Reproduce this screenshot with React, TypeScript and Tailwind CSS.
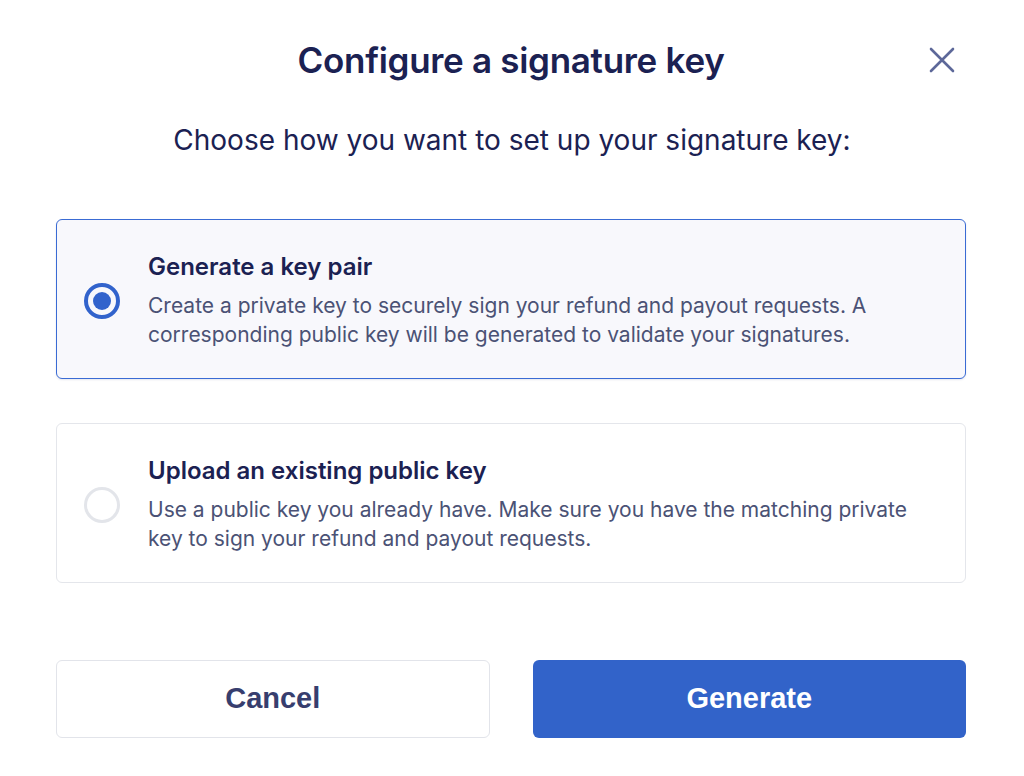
import React, { useState } from 'react';

type Choice = 'generate' | 'upload';

const options: { id: Choice; title: string; text: string }[] = [
  {
    id: 'generate',
    title: 'Generate a key pair',
    text: 'Create a private key to securely sign your refund and payout requests. A corresponding public key will be generated to validate your signatures.',
  },
  {
    id: 'upload',
    title: 'Upload an existing public key',
    text: 'Use a public key you already have. Make sure you have the matching private key to sign your refund and payout requests.',
  },
];

const App: React.FC = () => {
  const [choice, setChoice] = useState<Choice>('generate');

  return (
    <div className="min-h-screen w-full bg-white font-['Inter',sans-serif] text-[#1b2152]">
      {/* header */}
      <div className="grid grid-cols-[1fr_auto_1fr] items-center pl-[56px] pr-[58px] pt-[36px]">
        <div />
        <h1 className="text-[35px] leading-[48px] font-semibold tracking-[-0.3px] text-[#1b2152]">
          Configure a signature key
        </h1>
        <button className="justify-self-end mr-[10px] text-[#5d6899]" aria-label="Close">
          <svg width="28" height="28" viewBox="0 0 28 28" fill="none" stroke="currentColor" strokeWidth="2.6" strokeLinecap="round">
            <path d="M3 3L25 25M25 3L3 25" />
          </svg>
        </button>
      </div>

      <p className="mt-[38px] text-center text-[28px] leading-[36px] text-[#1b2152]">
        Choose how you want to set up your signature key:
      </p>

      <div className="ml-[56px] mr-[58px] mt-[61px] flex flex-col gap-[44px]">
        {options.map((o) => {
          const active = choice === o.id;
          return (
            <button
              key={o.id}
              onClick={() => setChoice(o.id)}
              className={
                active
                  ? 'flex items-center gap-[28px] rounded-[6px] border-[1.5px] border-[#3a6bd4] bg-[#f8f8fc] pl-[27px] pr-[46px] pt-[33px] pb-[29px] text-left shadow-[0_1px_2px_rgba(40,60,120,0.12)]'
                  : 'flex items-center gap-[28px] rounded-[6px] border-[1.5px] border-[#e4e6eb] bg-white pl-[27px] pr-[46px] pt-[33px] pb-[29px] text-left'
              }
            >
              <span
                className={
                  active
                    ? 'flex h-[36px] w-[36px] shrink-0 items-center justify-center rounded-full border-[4px] border-[#3263cc]'
                    : 'flex h-[36px] w-[36px] shrink-0 items-center justify-center rounded-full border-[3px] border-[#e3e5ea]'
                }
              >
                {active && <span className="h-[18px] w-[18px] rounded-full bg-[#3263cc]" />}
              </span>
              <span className="flex flex-col">
                <span className="text-[24px] leading-[28px] font-semibold text-[#1b2152]">{o.title}</span>
                <span className="mt-[10px] text-[21px] leading-[29px] text-[#4b5275]">{o.text}</span>
              </span>
            </button>
          );
        })}
      </div>

      <div className="ml-[56px] mr-[58px] mt-[77px] grid grid-cols-2 gap-[43px] font-['Liberation_Sans',sans-serif]">
        <button className="h-[78px] rounded-[6px] border-[1.5px] border-[#e2e4ea] bg-white text-[29px] font-bold text-[#373e6e]">
          Cancel
        </button>
        <button className="h-[78px] rounded-[6px] bg-[#3263c9] text-[29px] font-bold text-white">
          Generate
        </button>
      </div>
    </div>
  );
};

export default App;
